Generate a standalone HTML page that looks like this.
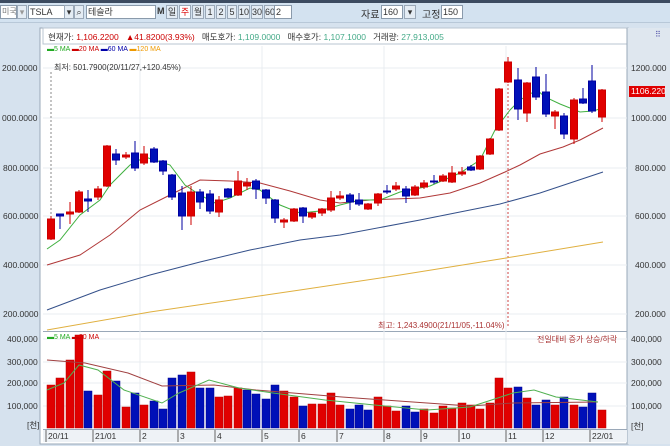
<!DOCTYPE html>
<html><head><meta charset="utf-8"><style>
*{margin:0;padding:0;box-sizing:border-box}
body{width:670px;height:446px;overflow:hidden;background:#d6e2ee;font-family:"Liberation Sans","Noto Sans CJK KR",sans-serif;font-size:9px;position:relative;color:#333}
.a{position:absolute;white-space:nowrap}
.box{position:absolute;background:#fff;border:1px solid #8a9aab;height:14px;font-size:9px;line-height:12px;padding-left:1px;white-space:nowrap;overflow:hidden}
.btn{position:absolute;top:5px;height:14px;background:#e4ecf4;border:1px solid #9aa8b8;font-size:9px;line-height:12px;text-align:center;white-space:nowrap;overflow:hidden}
.lab{position:absolute;font-size:8.5px;color:#333;white-space:nowrap}
</style></head><body>
<div class="a" style="left:0;top:0;width:670px;height:3px;background:#3c4b60"></div>
<div class="a" style="left:0;top:3px;width:670px;height:20px;background:#d3e2f0;border-bottom:1px solid #b8c8d8"></div>
<div class="box" style="left:0;top:5px;width:17px;color:#777;font-size:8px">미국</div>
<div class="btn" style="left:17px;width:10px;color:#999">▾</div>
<div class="box" style="left:28px;top:5px;width:45px">TSLA</div>
<div class="btn" style="left:64px;width:10px">▾</div>
<div class="btn" style="left:74px;width:10px">⌕</div>
<div class="box" style="left:86px;top:5px;width:70px">테슬라</div>
<div class="a" style="left:157px;top:6px;font-weight:bold;font-size:9px">M</div>
<div class="btn" style="left:166px;width:12px">일</div>
<div class="btn" style="left:179px;width:12px;color:#d00;background:#fff">주</div>
<div class="btn" style="left:192px;width:12px">월</div>
<div class="btn" style="left:205px;width:10px">1</div>
<div class="btn" style="left:216px;width:10px">2</div>
<div class="btn" style="left:227px;width:10px">5</div>
<div class="btn" style="left:238px;width:12px">10</div>
<div class="btn" style="left:251px;width:12px">30</div>
<div class="btn" style="left:264px;width:12px">60</div>
<div class="box" style="left:274px;top:5px;width:18px">2</div>
<div class="a" style="left:361px;top:6px;font-size:10px">자료</div>
<div class="box" style="left:381px;top:5px;width:22px">160</div>
<div class="btn" style="left:404px;width:12px">▾</div>
<div class="a" style="left:422px;top:6px;font-size:10px">고정</div>
<div class="box" style="left:441px;top:5px;width:22px">150</div>

<svg class="a" style="left:0;top:0" width="670" height="446" xmlns="http://www.w3.org/2000/svg">
<rect x="40" y="28" width="588" height="416" fill="#fff" stroke="#9aa8b8"/>
<rect x="43" y="28" width="584" height="16" fill="#fff" stroke="#b8c4d0"/>
<rect x="627" y="28" width="43" height="416" fill="#dfe7ef"/>
<line x1="627" y1="28" x2="627" y2="444" stroke="#9aa8b8"/>
<line x1="43" y1="331.5" x2="627" y2="331.5" stroke="#9aa8b8"/>
<line x1="43" y1="429.5" x2="627" y2="429.5" stroke="#9aa8b8"/>
<rect x="43" y="430" width="584" height="12" fill="#eef2f6"/>
<g stroke="#e8ecf0">
<line x1="43" y1="68" x2="627" y2="68"/><line x1="43" y1="118" x2="627" y2="118"/><line x1="43" y1="168" x2="627" y2="168"/><line x1="43" y1="216" x2="627" y2="216"/><line x1="43" y1="265" x2="627" y2="265"/><line x1="43" y1="314" x2="627" y2="314"/>
<line x1="43" y1="339" x2="627" y2="339"/><line x1="43" y1="362" x2="627" y2="362"/><line x1="43" y1="383" x2="627" y2="383"/><line x1="43" y1="406" x2="627" y2="406"/>
<line x1="140" y1="46" x2="140" y2="428"/><line x1="262" y1="46" x2="262" y2="428"/><line x1="384" y1="46" x2="384" y2="428"/><line x1="506" y1="46" x2="506" y2="428"/>
</g>
<g stroke="#666">
<line x1="46" y1="430" x2="46" y2="442"/><line x1="93" y1="430" x2="93" y2="442"/><line x1="140" y1="430" x2="140" y2="442"/><line x1="178" y1="430" x2="178" y2="442"/><line x1="215" y1="430" x2="215" y2="442"/><line x1="262" y1="430" x2="262" y2="442"/><line x1="299" y1="430" x2="299" y2="442"/><line x1="337" y1="430" x2="337" y2="442"/><line x1="384" y1="430" x2="384" y2="442"/><line x1="421" y1="430" x2="421" y2="442"/><line x1="459" y1="430" x2="459" y2="442"/><line x1="506" y1="430" x2="506" y2="442"/><line x1="543" y1="430" x2="543" y2="442"/><line x1="590" y1="430" x2="590" y2="442"/>
</g>
<line x1="51" y1="72" x2="51" y2="216" stroke="#888" stroke-dasharray="2,2"/>
<line x1="508" y1="60" x2="508" y2="326" stroke="#c44" stroke-dasharray="2,2"/>
<polyline fill="none" stroke="#e0b040" points="47,330 150,312 300,290 400,275 500,259 603,242"/>
<polyline fill="none" stroke="#34508a" points="47,310 100,290 150,275 200,262 250,250 300,240 340,235 420,220 500,204 540,193 603,172"/>
<polyline fill="none" stroke="#b03838" points="47,265 80,255 110,235 140,210 170,195 200,180 230,181 260,183 290,191 320,200 340,203 370,200 420,198 450,193 480,183 505,172 520,165 540,154 563,147 580,140 603,128"/>
<polyline fill="none" stroke="#40b040" points="47,249 60,240 80,215 100,200 110,185 130,165 145,157 155,160 170,165 185,185 200,195 215,203 230,198 250,188 260,190 280,205 300,213 320,211 340,205 360,200 380,200 400,192 430,186 460,173 480,160 495,130 510,110 520,100 530,94 537,90 545,97 560,104 580,112 593,111 603,108"/>
<g stroke-width="1">
<g stroke="#c00" fill="#e00000">
<line x1="51" y1="216" x2="51" y2="240"/><rect x="47.5" y="219" width="7" height="20"/>
<line x1="70" y1="202" x2="70" y2="224"/><rect x="66.5" y="212" width="7" height="2"/>
<line x1="79" y1="190" x2="79" y2="213"/><rect x="75.5" y="192" width="7" height="20"/>
<line x1="98" y1="186" x2="98" y2="200"/><rect x="94.5" y="189" width="7" height="8"/>
<line x1="107" y1="145" x2="107" y2="187"/><rect x="103.5" y="146" width="7" height="40"/>
<line x1="126" y1="152" x2="126" y2="159"/><rect x="122.5" y="155" width="7" height="2"/>
<line x1="144" y1="146" x2="144" y2="165"/><rect x="140.5" y="154" width="7" height="9"/>
<line x1="191" y1="186" x2="191" y2="225"/><rect x="187.5" y="192" width="7" height="24"/>
<line x1="219" y1="196" x2="219" y2="217"/><rect x="215.5" y="200" width="7" height="12"/>
<line x1="238" y1="171" x2="238" y2="196"/><rect x="234.5" y="181" width="7" height="14"/>
<line x1="247" y1="178" x2="247" y2="190"/><rect x="243.5" y="183" width="7" height="3"/>
<line x1="284" y1="218" x2="284" y2="228"/><rect x="280.5" y="220" width="7" height="2"/>
<line x1="294" y1="208" x2="294" y2="222"/><rect x="290.5" y="209" width="7" height="12"/>
<line x1="312" y1="212" x2="312" y2="219"/><rect x="308.5" y="213" width="7" height="4"/>
<line x1="322" y1="208" x2="322" y2="216"/><rect x="318.5" y="209" width="7" height="4"/>
<line x1="331" y1="191" x2="331" y2="212"/><rect x="327.5" y="198" width="7" height="12"/>
<line x1="340" y1="191" x2="340" y2="200"/><rect x="336.5" y="196" width="7" height="2"/>
<line x1="368" y1="203" x2="368" y2="210"/><rect x="364.5" y="204" width="7" height="5"/>
<line x1="378" y1="193" x2="378" y2="206"/><rect x="374.5" y="194" width="7" height="9"/>
<line x1="396" y1="182" x2="396" y2="191"/><rect x="392.5" y="186" width="7" height="3"/>
<line x1="415" y1="185" x2="415" y2="196"/><rect x="411.5" y="187" width="7" height="8"/>
<line x1="424" y1="180" x2="424" y2="189"/><rect x="420.5" y="183" width="7" height="4"/>
<line x1="443" y1="174" x2="443" y2="182"/><rect x="439.5" y="176" width="7" height="5"/>
<line x1="452" y1="166" x2="452" y2="183"/><rect x="448.5" y="173" width="7" height="9"/>
<line x1="462" y1="167" x2="462" y2="176"/><rect x="458.5" y="172" width="7" height="2"/>
<line x1="480" y1="155" x2="480" y2="170"/><rect x="476.5" y="156" width="7" height="13"/>
<line x1="490" y1="138" x2="490" y2="155"/><rect x="486.5" y="139" width="7" height="15"/>
<line x1="499" y1="88" x2="499" y2="131"/><rect x="495.5" y="89" width="7" height="41"/>
<line x1="508" y1="57" x2="508" y2="83"/><rect x="504.5" y="62" width="7" height="20"/>
<line x1="527" y1="82" x2="527" y2="122"/><rect x="523.5" y="83" width="7" height="30"/>
<line x1="555" y1="110" x2="555" y2="129"/><rect x="551.5" y="112" width="7" height="4"/>
<line x1="574" y1="98" x2="574" y2="144"/><rect x="570.5" y="100" width="7" height="39"/>
<line x1="602" y1="89" x2="602" y2="122"/><rect x="598.5" y="90" width="7" height="27"/>
</g>
<g stroke="#0000a0" fill="#0010b8">
<line x1="60" y1="214" x2="60" y2="229"/><rect x="56.5" y="214" width="7" height="2"/>
<line x1="88" y1="190" x2="88" y2="212"/><rect x="84.5" y="199" width="7" height="2"/>
<line x1="116" y1="149" x2="116" y2="165"/><rect x="112.5" y="154" width="7" height="6"/>
<line x1="135" y1="141" x2="135" y2="171"/><rect x="131.5" y="153" width="7" height="15"/>
<line x1="154" y1="147" x2="154" y2="163"/><rect x="150.5" y="149" width="7" height="13"/>
<line x1="163" y1="160" x2="163" y2="175"/><rect x="159.5" y="161" width="7" height="10"/>
<line x1="172" y1="174" x2="172" y2="200"/><rect x="168.5" y="175" width="7" height="22"/>
<line x1="182" y1="186" x2="182" y2="230"/><rect x="178.5" y="193" width="7" height="23"/>
<line x1="200" y1="189" x2="200" y2="209"/><rect x="196.5" y="192" width="7" height="10"/>
<line x1="210" y1="190" x2="210" y2="214"/><rect x="206.5" y="194" width="7" height="17"/>
<line x1="228" y1="188" x2="228" y2="198"/><rect x="224.5" y="189" width="7" height="8"/>
<line x1="256" y1="179" x2="256" y2="199"/><rect x="252.5" y="181" width="7" height="8"/>
<line x1="266" y1="189" x2="266" y2="204"/><rect x="262.5" y="190" width="7" height="8"/>
<line x1="275" y1="199" x2="275" y2="223"/><rect x="271.5" y="200" width="7" height="18"/>
<line x1="303" y1="207" x2="303" y2="223"/><rect x="299.5" y="208" width="7" height="8"/>
<line x1="350" y1="193" x2="350" y2="210"/><rect x="346.5" y="195" width="7" height="7"/>
<line x1="359" y1="193" x2="359" y2="206"/><rect x="355.5" y="200" width="7" height="4"/>
<line x1="387" y1="185" x2="387" y2="194"/><rect x="383.5" y="191" width="7" height="1"/>
<line x1="406" y1="186" x2="406" y2="203"/><rect x="402.5" y="189" width="7" height="7"/>
<line x1="434" y1="175" x2="434" y2="184"/><rect x="430.5" y="181" width="7" height="1"/>
<line x1="471" y1="165" x2="471" y2="171"/><rect x="467.5" y="167" width="7" height="3"/>
<line x1="518" y1="68" x2="518" y2="120"/><rect x="514.5" y="80" width="7" height="29"/>
<line x1="536" y1="67" x2="536" y2="100"/><rect x="532.5" y="77" width="7" height="20"/>
<line x1="546" y1="74" x2="546" y2="117"/><rect x="542.5" y="92" width="7" height="22"/>
<line x1="564" y1="113" x2="564" y2="139"/><rect x="560.5" y="116" width="7" height="18"/>
<line x1="583" y1="88" x2="583" y2="104"/><rect x="579.5" y="99" width="7" height="4"/>
<line x1="592" y1="65" x2="592" y2="113"/><rect x="588.5" y="81" width="7" height="30"/>
</g>
</g>
<g fill="#e00000" stroke="#b00" stroke-width="0.5">
<rect x="47" y="385" width="8" height="43"/><rect x="56" y="378" width="8" height="50"/><rect x="66" y="360" width="8" height="68"/><rect x="75" y="335" width="8" height="93"/>
<rect x="94" y="395" width="8" height="33"/><rect x="103" y="371" width="8" height="57"/><rect x="122" y="407" width="8" height="21"/><rect x="140" y="405" width="8" height="23"/>
<rect x="187" y="372" width="8" height="56"/><rect x="215" y="397" width="8" height="31"/><rect x="224" y="396" width="8" height="32"/><rect x="234" y="388" width="8" height="40"/>
<rect x="280" y="391" width="8" height="37"/><rect x="290" y="397" width="8" height="31"/><rect x="308" y="404" width="8" height="24"/><rect x="318" y="404" width="8" height="24"/><rect x="327" y="393" width="8" height="35"/><rect x="336" y="405" width="8" height="23"/>
<rect x="374" y="397" width="8" height="31"/><rect x="383" y="406" width="8" height="22"/><rect x="392" y="411" width="8" height="17"/><rect x="420" y="409" width="8" height="19"/><rect x="430" y="413" width="8" height="15"/><rect x="439" y="406" width="8" height="22"/><rect x="448" y="408" width="8" height="20"/><rect x="458" y="403" width="8" height="25"/><rect x="467" y="405" width="8" height="23"/><rect x="476" y="409" width="8" height="19"/><rect x="486" y="403" width="8" height="25"/><rect x="495" y="378" width="8" height="50"/><rect x="504" y="388" width="8" height="40"/>
<rect x="523" y="398" width="8" height="30"/><rect x="551" y="405" width="8" height="23"/><rect x="570" y="405" width="8" height="23"/><rect x="598" y="410" width="8" height="18"/>
</g>
<g fill="#0010b8" stroke="#000090" stroke-width="0.5">
<rect x="84" y="391" width="8" height="37"/><rect x="112" y="381" width="8" height="47"/><rect x="131" y="393" width="8" height="35"/><rect x="150" y="401" width="8" height="27"/><rect x="159" y="409" width="8" height="19"/><rect x="168" y="378" width="8" height="50"/><rect x="178" y="375" width="8" height="53"/><rect x="196" y="388" width="8" height="40"/><rect x="206" y="388" width="8" height="40"/>
<rect x="243" y="390" width="8" height="38"/><rect x="252" y="394" width="8" height="34"/><rect x="262" y="399" width="8" height="29"/><rect x="271" y="385" width="8" height="43"/><rect x="299" y="406" width="8" height="22"/>
<rect x="346" y="409" width="8" height="19"/><rect x="355" y="405" width="8" height="23"/><rect x="364" y="410" width="8" height="18"/><rect x="402" y="406" width="8" height="22"/><rect x="411" y="412" width="8" height="16"/>
<rect x="514" y="387" width="8" height="41"/><rect x="532" y="405" width="8" height="23"/><rect x="542" y="400" width="8" height="28"/><rect x="560" y="397" width="8" height="31"/><rect x="579" y="407" width="8" height="21"/><rect x="588" y="393" width="8" height="35"/>
</g>
<polyline fill="none" stroke="#a04040" points="47,360 85,363 128,373 162,386 214,385 256,390 342,397 427,403 470,406 513,403 598,402"/>
<polyline fill="none" stroke="#50b050" points="47,390 64,383 79,365 98,370 124,390 162,403 179,393 209,380 239,388 273,393 325,400 385,406 427,410 470,407 513,393 534,390 556,397 598,402"/>
<rect x="629" y="86" width="36" height="11" fill="#e00000"/>
</svg>

<div class="a" style="left:48px;top:31px;font-size:8.5px;color:#333">현재가: <span style="color:#c00">1,106.2200</span> &nbsp;&nbsp;<span style="color:#c00">▲41.8200(3.93%)</span> &nbsp;&nbsp;매도호가: <span style="color:#4a8">1,109.0000</span> &nbsp;&nbsp;매수호가: <span style="color:#4a8">1,107.1000</span> &nbsp;&nbsp;거래량: <span style="color:#4a8">27,913,005</span></div>
<div class="a" style="left:47px;top:46px;font-size:7px"><span style="color:#2a2">▬5 MA</span> <span style="color:#c00">▬20 MA</span> <span style="color:#00a">▬60 MA</span> <span style="color:#e90">▬120 MA</span></div>
<div class="a" style="left:54px;top:62px;font-size:8px;color:#333">최저: 501.7900(20/11/27,+120.45%)</div>
<div class="a" style="left:378px;top:320px;font-size:8px;color:#a33">최고: 1,243.4900(21/11/05,-11.04%)</div>
<div class="a" style="left:47px;top:334px;font-size:7px"><span style="color:#2a2">▬5 MA</span> <span style="color:#c00">▬20 MA</span></div>
<div class="a" style="left:537px;top:334px;font-size:8px;color:#a33">전일대비 증가 상승/하락</div>
<div class="a" style="left:655px;top:30px;font-size:8px;color:#55a">⠿</div>

<div class="lab" style="left:2px;top:63px">200.0000</div>
<div class="lab" style="left:2px;top:113px">000.0000</div>
<div class="lab" style="left:3px;top:163px">800.0000</div>
<div class="lab" style="left:3px;top:211px">600.0000</div>
<div class="lab" style="left:3px;top:260px">400.0000</div>
<div class="lab" style="left:3px;top:309px">200.0000</div>
<div class="lab" style="left:631px;top:63px">1200.000</div>
<div class="lab" style="left:631px;top:86px;color:#fff">1106.220</div>
<div class="lab" style="left:631px;top:113px">1000.000</div>
<div class="lab" style="left:635px;top:163px">800.000</div>
<div class="lab" style="left:635px;top:211px">600.000</div>
<div class="lab" style="left:635px;top:260px">400.000</div>
<div class="lab" style="left:635px;top:309px">200.000</div>
<div class="lab" style="left:7px;top:334px">400,000</div>
<div class="lab" style="left:7px;top:357px">300,000</div>
<div class="lab" style="left:7px;top:378px">200,000</div>
<div class="lab" style="left:7px;top:401px">100,000</div>
<div class="lab" style="left:27px;top:419px">[천]</div>
<div class="lab" style="left:631px;top:334px">400,000</div>
<div class="lab" style="left:631px;top:357px">300,000</div>
<div class="lab" style="left:631px;top:378px">200,000</div>
<div class="lab" style="left:631px;top:401px">100,000</div>
<div class="lab" style="left:631px;top:420px">[천]</div>
<div class="lab" style="left:48px;top:431px">20/11</div>
<div class="lab" style="left:95px;top:431px">21/01</div>
<div class="lab" style="left:142px;top:431px">2</div>
<div class="lab" style="left:180px;top:431px">3</div>
<div class="lab" style="left:217px;top:431px">4</div>
<div class="lab" style="left:264px;top:431px">5</div>
<div class="lab" style="left:301px;top:431px">6</div>
<div class="lab" style="left:339px;top:431px">7</div>
<div class="lab" style="left:386px;top:431px">8</div>
<div class="lab" style="left:423px;top:431px">9</div>
<div class="lab" style="left:461px;top:431px">10</div>
<div class="lab" style="left:508px;top:431px">11</div>
<div class="lab" style="left:545px;top:431px">12</div>
<div class="lab" style="left:592px;top:431px">22/01</div>
</body></html>
